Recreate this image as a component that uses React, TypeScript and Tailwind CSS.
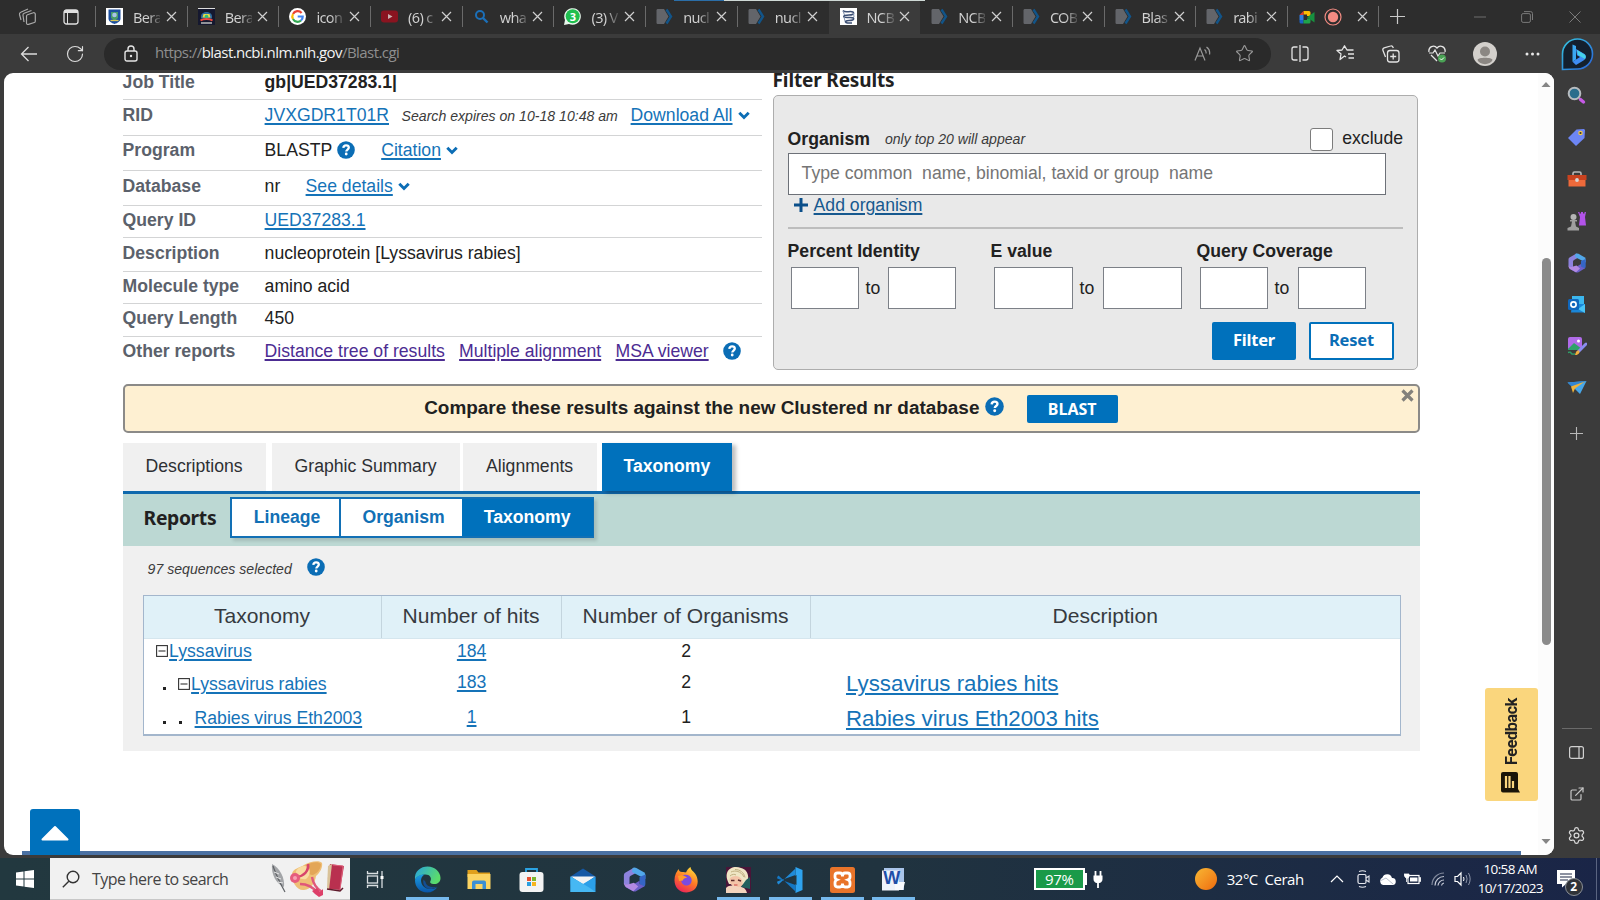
import React from "react";
import { RotateCw, Star, Settings, ExternalLink } from "lucide-react";

const UI = "font-['Open_Sans','Noto_Sans',sans-serif]";
const SRC = "font-['Noto_Sans',sans-serif]";

type Kids = { children?: React.ReactNode; className?: string };

function Svg({ w, h, vb, className = "", children }: { w: number; h: number; vb: string; className?: string; children: React.ReactNode }) {
  return (
    <svg width={w} height={h} viewBox={vb} fill="none" className={`block shrink-0 ${className}`}>
      {children}
    </svg>
  );
}

function Link({ children, className = "" }: Kids) {
  return (
    <a className={`text-[#1573b8] underline decoration-[1.5px] underline-offset-[2px] ${className}`}>{children}</a>
  );
}

function Visited({ children, className = "" }: Kids) {
  return (
    <a className={`text-[#4c2c92] underline decoration-[1.5px] underline-offset-[2px] ${className}`}>{children}</a>
  );
}

function Help({ size = 18, className = "" }: { size?: number; className?: string }) {
  return (
    <Svg w={size} h={size} vb="0 0 18 18" className={className}>
      <circle cx="9" cy="9" r="8.8" fill="#0b6db5" />
      <path d="M6.3 6.9c.2-1.7 1.3-2.5 2.8-2.5 1.6 0 2.7.9 2.7 2.2 0 1.900-2.500 2-2.500 3.900" stroke="#fff" strokeWidth="2.300" />
      <circle cx="9.200" cy="13" r="1.400" fill="#fff" />
    </Svg>
  );
}

function Chevron({ className = "" }: { className?: string }) {
  return (
    <Svg w={12} h={9} vb="0 0 12 9" className={className}>
      <path d="M1.300 1.800 6 6.500 10.700 1.800" stroke="#0b6db5" strokeWidth="2.900" />
    </Svg>
  );
}

/* ---------- favicons ---------- */

function Crest({ dark = false }: { dark?: boolean }) {
  return (
    <Svg w={17} h={17} vb="0 0 17 17">
      <rect width="17" height="17" fill={dark ? "#15182f" : "#fff"} />
      {dark ? (
        <>
          <path d="M0 .5h17" stroke="#ddd" />
          <path d="M3 8.500c0-6 11-6 11 0v2H3z" fill="#2d6a9c" />
          <path d="M5.500 6h6l1 3.500h-8z" fill="#e3d84a" />
          <circle cx="8.500" cy="8.500" r="1.800" fill="#3b7" />
          <path d="M2.500 12.500c3-2 9-2 12 0" stroke="#f04a3c" strokeWidth="2" />
          <path d="M3 15h11" stroke="#bbb" strokeWidth="1.500" />
        </>
      ) : (
        <>
          <path d="M2.500 1.500h12v9c0 3-3 4.500-6 5.500-3-1-6-2.500-6-5.500z" fill="#1c4fa0" />
          <path d="M5 4h7v6l-3.500 3L5 10z" fill="#4a9d6a" />
          <circle cx="8.500" cy="7" r="2.300" fill="#a9c4e8" />
          <path d="M4.500 12.500h8" stroke="#d8c65a" strokeWidth="1.300" />
        </>
      )}
    </Svg>
  );
}

function Google() {
  return (
    <Svg w={17} h={17} vb="0 0 17 17">
      <circle cx="8.500" cy="8.500" r="8.500" fill="#fff" />
      <path d="M12.600 5A5.200 5.200 0 0 0 4 6" stroke="#ea4335" strokeWidth="2.200" />
      <path d="M4 6a5.200 5.200 0 0 0 0 5" stroke="#fbbc05" strokeWidth="2.200" />
      <path d="M4 11a5.200 5.200 0 0 0 8 1.500" stroke="#34a853" strokeWidth="2.200" />
      <path d="M12 12.500a5 5 0 0 0 1.700-4H8.700" stroke="#4285f4" strokeWidth="2.200" />
    </Svg>
  );
}

function YouTube() {
  return (
    <Svg w={17} h={17} vb="0 0 17 17">
      <rect y="2.500" width="17" height="12" rx="3" fill="#8a1420" />
      <path d="m7 6 4.500 2.500L7 11z" fill="#c9b0b0" />
    </Svg>
  );
}

function BlueSearch() {
  return (
    <Svg w={17} h={17} vb="0 0 17 17">
      <circle cx="7" cy="7" r="4" stroke="#1b6fb8" strokeWidth="2" />
      <path d="m10 10 4.500 4.500" stroke="#1b6fb8" strokeWidth="2.400" />
    </Svg>
  );
}

function WhatsApp() {
  return (
    <span className="relative block size-[17px]">
      <Svg w={17} h={17} vb="0 0 17 17">
        <path d="M0 17 1 12A8.300 8.300 0 1 1 5 16z" fill="#e8f7ec" />
        <circle cx="8.700" cy="8.300" r="7" fill="#1fbf4f" />
      </Svg>
      <span className={`absolute inset-0 text-center text-[11px] leading-[17px] font-bold text-white ${UI}`}>3</span>
    </span>
  );
}

function Ncbi() {
  return (
    <Svg w={17} h={17} vb="0 0 17 17">
      <path d="M.5 2.500C.5 1.500 1 1 2 1h6l4.500 7.500L8 16H2c-1 0-1.500-.5-1.500-1.500z" fill="#63656a" />
      <path d="m10.500 1.500 4.500 7-4.500 7" stroke="#115489" strokeWidth="2.400" />
    </Svg>
  );
}

function Helix() {
  return (
    <Svg w={17} h={17} vb="0 0 17 17">
      <rect width="17" height="17" fill="#fff" />
      <path d="M3 2.500c2 3 7 0 10 1.500 2 2-1 3-4 3-3.500 0-6 .5-5 2 2 1.500 7-.5 9.500 1 1 2-2 2.500-4.500 2.500-3 0-4.500 1-3 2 2 1 4 .5 6 .5" stroke="#3c4f74" strokeWidth="1.500" />
      <path d="M3 3l1.500 4M13.500 5l.5 4M4 9l1 4" stroke="#8091ad" />
    </Svg>
  );
}

const tabs: { icon: React.ReactNode; text: string; active?: boolean }[] = [
  { icon: <Crest />, text: "Bera" },
  { icon: <Crest dark />, text: "Bera" },
  { icon: <Google />, text: "icon" },
  { icon: <YouTube />, text: "(6) c" },
  { icon: <BlueSearch />, text: "wha" },
  { icon: <WhatsApp />, text: "(3) V" },
  { icon: <Ncbi />, text: "nucl" },
  { icon: <Ncbi />, text: "nucl" },
  { icon: <Helix />, text: "NCB", active: true },
  { icon: <Ncbi />, text: "NCB" },
  { icon: <Ncbi />, text: "COB" },
  { icon: <Ncbi />, text: "Blas" },
  { icon: <Ncbi />, text: "rabi" },
];

function CloseX() {
  return (
    <Svg w={11} h={11} vb="0 0 11 11">
      <path d="m1 1 9 9M10 1l-9 9" stroke="#cfcfcf" strokeWidth="1.200" />
    </Svg>
  );
}

function TabStrip() {
  return (
    <div className="relative flex h-[34px] shrink-0 items-center bg-[#2d2d2d] pb-px">
      <div className="flex w-[95px] shrink-0 items-center pl-[17.500px]">
        <Svg w={19} h={18} vb="0 0 19 18">
          <g stroke="#a9a9a9" strokeWidth="1.200" strokeLinejoin="round">
            <path d="M8.500 8a1.500 1.500 0 0 1 1-1.300l5.800-1.900a1.500 1.500 0 0 1 2 1.400v7a1.500 1.500 0 0 1-1 1.300l-5.800 1.900a1.500 1.500 0 0 1-2-1.400z" />
            <path d="M6 14 5 7.500a2 2 0 0 1 1.200-2.200L13.500 2.500" />
            <path d="M3 12 1.500 6.500a2 2 0 0 1 1.200-2.300L10 1" />
          </g>
        </Svg>
        <Svg w={16} h={16} vb="0 0 16 16" className="ml-[26px]">
          <rect x="1" y="1" width="14" height="14" rx="2.500" stroke="#e0e0e0" strokeWidth="1.300" />
          <path d="M1 4V3a2 2 0 0 1 2-2h10a2 2 0 0 1 2 2v1z" fill="#e0e0e0" />
          <path d="M4.500 4v11" stroke="#e0e0e0" />
        </Svg>
      </div>
      {tabs.map((t, i) => (
        <div
          key={i}
          className={`flex h-[33px] w-[91.700px] shrink-0 items-center ${t.active ? "rounded-t-[3px] bg-[#3b3b3b] shadow-[0_1px_0_#3b3b3b]" : ""}`}
        >
          <span className={`h-[21px] w-px ${t.active || i === 9 ? "bg-transparent" : "bg-[#6a6a6a]"}`} />
          <span className="ml-[10px]">{t.icon}</span>
          <span
            className={`ml-[10px] w-[27px] bg-linear-to-r from-[#d2d2d2] from-55% to-[#d2d2d2]/20 bg-clip-text text-[14.500px] leading-5 tracking-[-0.650px] whitespace-nowrap text-transparent ${SRC}`}
          >
            {t.text}
          </span>
          <span className="ml-[5.500px]">
            <CloseX />
          </span>
        </div>
      ))}
      <span className="h-[21px] w-px bg-[#6a6a6a]" />
      <Svg w={16} h={16} vb="0 0 16 16" className="ml-[11px]">
        <path d="M4.500 2H10a1.500 1.500 0 0 1 1.500 1.500V7H8V5.500H4.500z" fill="#fbbc04" />
        <path d="M.5 6h4v5h-4z" fill="#2f7de1" />
        <path d="M.5 6 4.500 2v4z" fill="#e33b2e" />
        <path d="M.5 11h4v3.500H2A1.500 1.500 0 0 1 .5 13z" fill="#1b62c4" />
        <path d="M4.500 11H8V9.500h3.500V13a1.500 1.500 0 0 1-1.500 1.500H4.500z" fill="#1fa34a" />
        <path d="m8 8.300 7.500-5.300v10.500z" fill="#17913f" />
      </Svg>
      <Svg w={18} h={18} vb="0 0 18 18" className="ml-[9px]">
        <circle cx="9" cy="9" r="8" stroke="#f28b82" strokeWidth="1.200" />
        <circle cx="9" cy="9" r="5.200" fill="#f28b82" />
      </Svg>
      <span className="ml-[15px]">
        <CloseX />
      </span>
      <span className="ml-[10px] h-[21px] w-px bg-[#6a6a6a]" />
      <Svg w={15} h={15} vb="0 0 15 15" className="ml-[11px]">
        <path d="M7.500 0v15M0 7.500h15" stroke="#c9c9c9" strokeWidth="1.200" />
      </Svg>
      <Svg w={12} h={12} vb="0 0 12 12" className="ml-[69px]">
        <path d="M0 6h12" stroke="#6f6f6f" />
      </Svg>
      <Svg w={12} h={12} vb="0 0 12 12" className="ml-[35px]">
        <rect x=".6" y="2.600" width="8.800" height="8.800" rx="1.500" stroke="#7a7a7a" />
        <path d="M3 .6h6.500a2 2 0 0 1 2 2V9" stroke="#7a7a7a" />
      </Svg>
      <Svg w={12} h={12} vb="0 0 12 12" className="ml-[36px]">
        <path d="m.5.500 11 11M11.500.500l-11 11" stroke="#7a7a7a" />
      </Svg>
      <div className="absolute top-0 left-[674px] flex h-px w-[251px]">
        <span className="w-[50px] bg-[#2b6ea8]" />
        <span className="flex-1 bg-[#cfd9d6]" />
      </div>
    </div>
  );
}

function Toolbar() {
  return (
    <div className="flex h-[39px] shrink-0 items-center bg-[#3b3b3b]">
      <Svg w={18} h={16} vb="0 0 18 16" className="ml-[20px]">
        <path d="M17 8H1.500M8.500 1l-7 7 7 7" stroke="#dcdcdc" strokeWidth="1.300" />
      </Svg>
      <RotateCw size={20} strokeWidth={1.4} color="#dcdcdc" className="ml-[27px] shrink-0" />
      <div className="ml-[19px] flex h-[32px] w-[1167px] shrink-0 items-center rounded-full bg-[#2a2a2a]">
        <Svg w={14} h={17} vb="0 0 14 17" className="ml-[20px]">
          <rect x="1" y="6" width="12" height="10" rx="2" stroke="#e4e4e4" strokeWidth="1.400" />
          <path d="M4 6V4a3 3 0 0 1 6 0v2" stroke="#e4e4e4" strokeWidth="1.400" />
          <circle cx="7" cy="11" r="1.200" fill="#e4e4e4" />
        </Svg>
        <span className={`ml-[17px] pb-[2px] text-[15px] tracking-[-0.560px] whitespace-nowrap text-[#8f8f8f] ${UI}`}>
          https://<span className="text-[#f3f3f3]">blast.ncbi.nlm.nih.gov</span>/Blast.cgi
        </span>
        <span className="flex-1" />
        <Svg w={17} h={16} vb="0 0 17 16">
          <path d="M1 14.500 6 2l5 12.500M3 10h6.500" stroke="#9a9a9a" strokeWidth="1.200" />
          <path d="M10.500 3.500q2 1.500 1.500 4M12.500 1q4 3 3 7.500" stroke="#9a9a9a" strokeWidth="1.200" />
        </Svg>
        <Star size={19} strokeWidth={1.4} color="#9a9a9a" className="mr-[17px] ml-[24px]" />
      </div>
      <Svg w={18} h={17} vb="0 0 18 17" className="ml-[20px]">
        <path d="M6.500 2H3a2 2 0 0 0-2 2v9a2 2 0 0 0 2 2h3.500M11.500 2H15a2 2 0 0 1 2 2v9a2 2 0 0 1-2 2h-3.500M9 0v17" stroke="#e4e4e4" strokeWidth="1.300" />
      </Svg>
      <Svg w={19} h={17} vb="0 0 19 17" className="ml-[27px]">
        <path d="M10 12 8.500 11 4 14.500l1-5.500-4-3.500 5-.5L8.500.800 11 5h6.500M12 9h6M12.500 13H18" stroke="#e4e4e4" strokeWidth="1.300" strokeLinejoin="round" />
      </Svg>
      <Svg w={18} h={18} vb="0 0 18 18" className="ml-[27px]">
        <rect x="5.500" y="5.500" width="11.500" height="11.500" rx="2.500" stroke="#e4e4e4" strokeWidth="1.300" />
        <path d="M11.200 8.500v6M8.200 11.500h6M3.500 12 1 5.500a2 2 0 0 1 1.200-2.700L8.500 1a2 2 0 0 1 2.500 1.200l.3.800" stroke="#e4e4e4" strokeWidth="1.300" />
      </Svg>
      <Svg w={19} h={18} vb="0 0 19 18" className="ml-[28px]">
        <path d="M1 7C0 2 6-1 9 3c3-4 9-1 8 4M3 10l6 6" stroke="#e4e4e4" strokeWidth="1.300" />
        <path d="M1 8h4l2-3 3 6 2-3h5" stroke="#e4e4e4" strokeWidth="1.200" />
        <circle cx="14" cy="13.500" r="4" fill="#4aa255" />
        <path d="m12 13.500 1.500 1.500 2.500-2.500" stroke="#fff" />
      </Svg>
      <Svg w={24} h={24} vb="0 0 24 24" className="ml-[26px]">
        <circle cx="12" cy="12" r="12" fill="#d3d0cc" />
        <circle cx="12" cy="9.500" r="5" fill="#8b8783" />
        <path d="M4.500 18c0-3 15-3 15 0-2 5.500-13 5.500-15 0z" fill="#8b8783" />
      </Svg>
      <Svg w={15} h={4} vb="0 0 15 4" className="ml-[28px]">
        <g fill="#e8e8e8">
          <circle cx="2" cy="2" r="1.500" />
          <circle cx="7.500" cy="2" r="1.500" />
          <circle cx="13" cy="2" r="1.500" />
        </g>
      </Svg>
      <Svg w={33} h={34} vb="0 0 33 34" className="ml-[21px]">
        <defs>
          <linearGradient id="bing" x1="0" y1="0" x2="1" y2="1">
            <stop stopColor="#35c5e0" />
            <stop offset="1" stopColor="#2a62d8" />
          </linearGradient>
        </defs>
        <path d="M1.500 32.500V17a15 15 0 1 1 15 15z" fill="#14202e" stroke="url(#bing)" strokeWidth="1.600" />
        <path d="M11.500 7.500 15 9v13.500l-3.500 2.200z" fill="#3aa8f2" />
        <path d="m15 12 8.500 5c2.500 2 1.500 5-1 6.500L15 28l-3.500-3.300L19 20l-3-1.700z" fill="#3f8df5" />
        <path d="m16 13 7.500 4.500c1.500 1 1.500 3 .5 4.500L17 18z" fill="#45d2e8" />
      </Svg>
    </div>
  );
}

/* ---------- page ---------- */

function JobRow({ label, h, pt, last, children }: { label: string; h: string; pt: string; last?: boolean; children: React.ReactNode }) {
  return (
    <div className={`flow-root ${h} ${last ? "" : "border-b border-[#d3d4d5]"}`}>
      <div className={`flex items-baseline leading-5 whitespace-nowrap ${pt}`}>
        <span className="w-[142px] shrink-0 font-bold text-[#5b616b]">{label}</span>
        {children}
      </div>
    </div>
  );
}

function JobDetails() {
  return (
    <div className="w-[639px] shrink-0">
      <JobRow label="Job Title" h="h-[27px]" pt="-mt-px">
        <span className="font-bold">gb|UED37283.1|</span>
      </JobRow>
      <JobRow label="RID" h="h-[36px]" pt="pt-[5px]">
        <Link className="w-[137px]">JVXGDR1T01R</Link>
        <span className="w-[229px] text-[14.100px] text-[#3b3b3b] italic">Search expires on 10-18 10:48 am</span>
        <Link>Download All</Link>
        <Chevron className="mb-[1px] ml-[5px] self-center" />
      </JobRow>
      <JobRow label="Program" h="h-[35px]" pt="pt-[4px]">
        <span>BLASTP</span>
        <Help className="mr-[26px] ml-[5px] self-center" />
        <Link>Citation</Link>
        <Chevron className="ml-[5px] self-center" />
      </JobRow>
      <JobRow label="Database" h="h-[35px]" pt="pt-[5px]">
        <span className="w-[41px]">nr</span>
        <Link>See details</Link>
        <Chevron className="ml-[5px] self-center" />
      </JobRow>
      <JobRow label="Query ID" h="h-[32px]" pt="pt-[4px]">
        <Link>UED37283.1</Link>
      </JobRow>
      <JobRow label="Description" h="h-[34px]" pt="pt-[5px]">
        <span>nucleoprotein [Lyssavirus rabies]</span>
      </JobRow>
      <JobRow label="Molecule type" h="h-[32px]" pt="pt-[4px]">
        <span>amino acid</span>
      </JobRow>
      <JobRow label="Query Length" h="h-[33px]" pt="pt-[4px]">
        <span>450</span>
      </JobRow>
      <JobRow label="Other reports" h="h-[32px]" pt="pt-[4px]" last>
        <span className="w-[194.500px]"><Visited>Distance tree of results</Visited></span>
        <span className="w-[156.500px]"><Visited>Multiple alignment</Visited></span>
        <Visited>MSA viewer</Visited>
        <Help className="ml-[14px] self-center" />
      </JobRow>
    </div>
  );
}

function Range({ title, inputW, className = "", gap }: { title: string; inputW: string; className?: string; gap: string }) {
  const box = `h-[42px] border border-[#7c8087] bg-white ${inputW}`;
  return (
    <div className={className}>
      <div className="leading-5 font-bold">{title}</div>
      <div className="mt-[6px] ml-[3px] flex items-center">
        <span className={box} />
        <span className={gap}>to</span>
        <span className={box} />
      </div>
    </div>
  );
}

function FilterPanel() {
  return (
    <div className="ml-[11px] w-[645.400px] shrink-0">
      <div className={`h-[22px] text-[19px] leading-[14px] font-bold tracking-[-0.150px] ${SRC}`}>Filter Results</div>
      <div className="h-[275px] rounded-[5px] border border-[#adadad] bg-[#e9e9e9] pt-[32px] pr-[14px] pl-[14px]">
        <div className="flex h-[25px] items-center pb-[4px] leading-5">
          <span className="font-bold">Organism</span>
          <span className="ml-[15px] text-[14.100px] text-[#3b3b3b] italic">only top 20 will appear</span>
          <span className="flex-1" />
          <span className="mt-[1px] mr-[9px] size-[23px] rounded-[3px] border border-[#7c7c7c] bg-white" />
          <span className="pb-px">exclude</span>
        </div>
        <div className="flex h-[42px] w-[598px] items-center border border-[#6d7178] bg-white px-[13px] pb-[2px] whitespace-pre text-[#757575]">
          Type common  name, binomial, taxid or group  name
        </div>
        <div className="flex h-[34px] items-start border-b-2 border-[#bdbdbd] pl-[5px] leading-5">
          <Svg w={16} h={16} vb="0 0 16 16" className="mt-[2px] mr-[5px]">
            <path d="M8 1v14M1 8h14" stroke="#0b4f8a" strokeWidth="3" />
          </Svg>
          <span className="text-[#17598f] underline decoration-[1.500px] underline-offset-2">Add organism</span>
        </div>
        <div className="flex pt-[12px]">
          <Range title="Percent Identity" inputW="w-[68px]" gap="ml-[7px] w-[22px]" className="w-[203px]" />
          <Range title="E value" inputW="w-[79px]" gap="ml-[7px] w-[23px]" className="w-[206px]" />
          <Range title="Query Coverage" inputW="w-[68px]" gap="ml-[7px] w-[23px]" />
        </div>
        <div className={`mt-[13px] flex justify-end gap-[13px] pr-[9px] text-[16.500px] font-bold tracking-[-0.200px] ${SRC}`}>
          <span className="flex h-[38px] w-[84px] items-center justify-center rounded-[2px] bg-[#0071bc] pb-px text-white">Filter</span>
          <span className="flex h-[38px] w-[85px] items-center justify-center rounded-[2px] border-2 border-[#0071bc] bg-white pb-px text-[#0b6db5]">Reset</span>
        </div>
      </div>
    </div>
  );
}

function Banner() {
  return (
    <div className="flex h-[49px] items-start rounded-[5px] border-2 border-[#8b8a88] bg-[#fef0d2] pl-[299.600px]">
      <span className="mt-[11px] w-[561px] text-[18.930px] leading-[22px] font-bold whitespace-nowrap text-[#212121]">
        Compare these results against the new Clustered nr database
      </span>
      <Help size={19} className="mt-[11px]" />
      <span className={`mt-[9px] ml-[22.500px] flex h-[28px] w-[91px] items-center justify-center rounded-[2px] bg-[#0071bc] pb-px text-[16px] font-bold text-white ${SRC}`}>
        BLAST
      </span>
      <Svg w={13} h={13} vb="0 0 13 13" className="mt-[3px] ml-[283px]">
        <path d="m1.500 1.500 10 10M11.500 1.500l-10 10" stroke="#83817c" strokeWidth="3.200" />
      </Svg>
    </div>
  );
}

function MinusBox() {
  return (
    <Svg w={12} h={12} vb="0 0 12 12" className="mr-[1.500px]">
      <rect x=".6" y=".6" width="10.800" height="10.800" stroke="#333" strokeWidth="1.100" />
      <path d="M2.500 6h7" stroke="#333" strokeWidth="1.100" />
    </Svg>
  );
}

function Dot({ className = "" }: { className?: string }) {
  return <span className={`size-[3px] shrink-0 bg-[#222] ${className}`} />;
}

function TaxTable() {
  const grid = "grid grid-cols-[238px_180px_249px_1fr]";
  return (
    <div className="h-[141px] w-[1258.400px] border border-b-2 border-[#a3b6cc] bg-white">
      <div className={`${grid} h-[43px] border-b border-[#d5e6ee] bg-[#e0f1f8] text-center text-[21.070px] leading-[40px] text-[#363a40]`}>
        <span className="border-r border-[#c4d5de]">Taxonomy</span>
        <span className="border-r border-[#c4d5de]">Number of hits</span>
        <span className="border-r border-[#c4d5de]">Number of Organisms</span>
        <span>Description</span>
      </div>
      <div className={`${grid} h-[28px] pt-[2px] leading-5`}>
        <span className="flex h-5 items-center pl-[12px]">
          <MinusBox />
          <Link>Lyssavirus</Link>
        </span>
        <span className="text-center"><Link>184</Link></span>
        <span className="text-center">2</span>
      </div>
      <div className={`${grid} h-[34px] pt-[5px] leading-5`}>
        <span className="flex h-5 items-center pt-[4px] pl-[19px]">
          <Dot className="mt-[9px] mr-[12px]" />
          <MinusBox />
          <Link>Lyssavirus rabies</Link>
        </span>
        <span className="text-center"><Link>183</Link></span>
        <span className="text-center">2</span>
        <Link className="pt-[2px] pl-[35.400px] text-[22.300px]">Lyssavirus rabies hits</Link>
      </div>
      <div className={`${grid} h-[33px] pt-[6px] leading-5`}>
        <span className="flex h-5 items-center pt-[2px] pl-[19px]">
          <Dot className="mt-[9px] mr-[13px]" />
          <Dot className="mt-[9px] mr-[13px]" />
          <Link>Rabies virus Eth2003</Link>
        </span>
        <span className="text-center"><Link>1</Link></span>
        <span className="text-center">1</span>
        <Link className="pt-[2px] pl-[35.400px] text-[22.300px]">Rabies virus Eth2003 hits</Link>
      </div>
    </div>
  );
}

function Results() {
  const tab = "flex h-[48px] items-center justify-center pb-[2px]";
  return (
    <div>
      <div className="mt-[10px] flex border-b-[3px] border-[#0f69ad] text-[#2d2f33]">
        <span className={`${tab} w-[143px] bg-[#f0f0f0]`}>Descriptions</span>
        <span className={`${tab} ml-[6px] w-[188px] bg-[#f0f0f0]`}>Graphic Summary</span>
        <span className={`${tab} ml-[3px] w-[134px] bg-[#f0f0f0]`}>Alignments</span>
        <span className={`${tab} ml-[5.300px] w-[130px] bg-[#0071bc] font-bold text-white shadow-[4px_2px_4px_rgba(0,0,0,0.25)]`}>Taxonomy</span>
      </div>
      <div className="flex h-[52px] items-start bg-[#bcd8d3]">
        <span className={`mt-[10px] ml-[21px] w-[86px] text-[19.300px] leading-[28px] font-bold tracking-[-0.350px] ${SRC}`}>Reports</span>
        <div className="mt-[3px] flex h-[41px] border-2 border-[#1270b5] bg-white font-bold text-[#1270b5] shadow-[3px_3px_3px_rgba(0,0,0,0.12)]">
          <span className="flex w-[109px] items-center justify-center border-r-2 border-[#1270b5] pl-[4px]">Lineage</span>
          <span className="flex w-[121px] items-center justify-center pl-[5px]">Organism</span>
          <span className="-mr-px flex w-[131px] items-center justify-center bg-[#0071bc] text-white">Taxonomy</span>
        </div>
      </div>
      <div className="h-[205px] bg-[#f0f0f0] pl-[20px]">
        <div className="flex h-[49px] items-start pt-[13px] pl-[5px] text-[14.100px] leading-5 text-[#3b3b3b] italic">
          <span className="w-[159.500px]">97 sequences selected</span>
          <Help className="-mt-px" />
        </div>
        <TaxTable />
      </div>
    </div>
  );
}

function Page() {
  return (
    <div className="relative ml-[4px] flex h-[782px] w-[1550px] shrink-0 overflow-hidden rounded-[9px] bg-white font-['Liberation_Sans',Arial,sans-serif] text-[17.640px] text-[#212121]">
      <div className="w-[1534px] shrink-0 pl-[118.600px]">
        <div className="flex h-[311px]">
          <JobDetails />
          <FilterPanel />
        </div>
        <div className="w-[1297.400px]">
          <Banner />
          <Results />
        </div>
      </div>
      <div className="flex w-[16px] flex-col items-center bg-[#fcfcfc]">
        <Svg w={10} h={6} vb="0 0 10 6" className="mt-[9px]">
          <path d="M5 0 9.500 5H.5z" fill="#858585" />
        </Svg>
        <span className="mt-[170px] h-[387px] w-[9px] rounded-full bg-[#8b8b8b]" />
        <Svg w={10} h={6} vb="0 0 10 6" className="mt-[194px]">
          <path d="M5 5 9.500 0H.5z" fill="#858585" />
        </Svg>
      </div>
      <div className="absolute bottom-0 left-[18px] h-[4px] w-[1499px] bg-[#4b71a3]" />
      <div className="absolute bottom-0 left-[26px] flex h-[46px] w-[50px] justify-center rounded-t-[3px] bg-[#0071bc] pt-[16px]">
        <Svg w={28} h={17} vb="0 0 28 17">
          <path d="M14 2 26.500 14.500h-25z" fill="#fff" stroke="#fff" strokeWidth="2" strokeLinejoin="round" />
        </Svg>
      </div>
      <div className="absolute top-[615px] left-[1481px] flex h-[113px] w-[53px] flex-col items-center rounded-[3px] bg-[#fad67d]">
        <span className="mt-[10px] h-[67px] rotate-180 text-[16px] leading-[20px] font-bold tracking-[-0.300px] whitespace-nowrap [writing-mode:vertical-rl] font-['Roboto',sans-serif]">
          Feedback
        </span>
        <Svg w={19} h={21} vb="0 0 19 21" className="mt-[7px] mr-[3px]">
          <path d="M0 2a2 2 0 0 1 2-2h13a2 2 0 0 1 2 2v15l2 3.500H2a2 2 0 0 1-2-2z" fill="#1a1508" />
          <path d="M5 4v12M8.500 4v12M12 9v7" stroke="#fad67d" strokeWidth="2.200" />
        </Svg>
      </div>
    </div>
  );
}

/* ---------- browser sidebar ---------- */

function Ms365({ size }: { size: number }) {
  return (
    <Svg w={size} h={size} vb="0 0 20 20">
      <path d="M9.500.5 2.500 4.500Q1.500 5 1.500 6.500v7l4.500 2.500V8.500Q6 7.500 7 7l4.500-2.500V2z" fill="#8d82dd" />
      <path d="M8.500.8q1.500-.8 3 0l6 3.400q1.200.8 1.200 2.300v3L8 4z" fill="#52a8ea" />
      <path d="M18.700 6v7.500q0 1.500-1.200 2.200l-3.500-2V8z" fill="#3565c4" />
      <path d="m18 15.300-6.500 3.900q-1.500.8-3 0L2 15.500q5 .5 7-1.500l5-3v2.500z" fill="#6b5fc8" />
      <path d="M1.500 12.500Q2.500 15 6 13.500l3.500-1 3.500 3-4 3.800-6-3.400q-1.500-1-1.500-3.400z" fill="#b38ae2" />
    </Svg>
  );
}

const sideIcons: React.ReactNode[] = [
  <Svg w={19} h={19} vb="0 0 19 19">
    <circle cx="7.500" cy="7.500" r="5.800" fill="#2a6d8c" stroke="#b7bcc0" strokeWidth="2" />
    <path d="m12 12 2 2" stroke="#aaa" strokeWidth="2" />
    <path d="m13.500 13.500 3 2.500" stroke="#c65ae6" strokeWidth="3.400" strokeLinecap="round" />
  </Svg>,
  <Svg w={19} h={19} vb="0 0 19 19">
    <path d="M1 10 9.500 1.500 17 1l1 1-.5 8L9 18z" fill="#6d86f5" />
    <circle cx="13.500" cy="5" r="1.700" fill="#333" stroke="#f3c948" strokeWidth="1.200" />
  </Svg>,
  <Svg w={20} h={18} vb="0 0 20 18">
    <path d="M6 5V3.500Q6 2 7.500 2h5Q14 2 14 3.500V5" stroke="#b9b9b9" strokeWidth="1.600" />
    <path d="M.5 5h19v5H.5z" fill="#c9421f" />
    <path d="M1.500 10h17v6.500h-17z" fill="#ee6a3b" />
    <circle cx="10" cy="10" r="1.900" fill="#d7d7d7" />
  </Svg>,
  <Svg w={20} h={20} vb="0 0 20 20">
    <path d="M11 1h1.500v1.500H14V1h2v1.500h1.500V1H19l-1 5 1 8.500h-7L13 6z" fill="#b353ea" />
    <circle cx="6.500" cy="6" r="3" fill="#b5b5b5" />
    <path d="M3 9h7v1.500H8l1 5 3 1.500v2.500H.5V17L4 15.500l1-5H3z" fill="#9f9f9f" />
  </Svg>,
  <Ms365 size={20} />,
  <Svg w={19} h={19} vb="0 0 19 19">
    <path d="M5 1h12v10H5z" fill="#3cb7ee" />
    <path d="M5 9h13v8.500H4z" fill="#1a86d8" />
    <path d="m18 9-7 5 7 4z" fill="#49c4f5" />
    <rect x="1" y="4" width="11" height="11" rx="1.500" fill="#0f67bd" />
    <circle cx="6.500" cy="9.500" r="2.600" stroke="#fff" strokeWidth="1.700" />
  </Svg>,
  <Svg w={20} h={20} vb="0 0 20 20">
    <rect x="1" y="1" width="14" height="13" rx="2" fill="#b06be8" />
    <path d="M1 13 7 7l8 6v1H1z" fill="#2fa36b" />
    <circle cx="11.500" cy="5" r="1.500" fill="#fff" />
    <path d="m12 15 7-7" stroke="#8a8cf0" strokeWidth="3" strokeLinecap="round" />
    <path d="M8 19c1-4 2-5 4-4.500 1.500 2-1 5-4 4.500z" fill="#f2b13c" />
    <path d="M1 16.500q3-1 3 .5t4 1" stroke="#2fa36b" strokeWidth="1.400" />
  </Svg>,
  <Svg w={20} h={16} vb="0 0 20 16">
    <path d="M.5 2.500 19.500 1 13 14 8.500 9.500z" fill="#47a6e8" />
    <path d="m.5 2.500 19-1.500L6 8z" fill="#3186d2" />
    <path d="m4 6.500 14-5L8 8.500 6 13z" fill="#f0b33a" />
  </Svg>,
];

function Sidebar() {
  return (
    <div className="flex flex-1 flex-col items-center bg-[#3b3b3b] pr-px">
      <div className="flex flex-col items-center pt-[1.500px]">
        {sideIcons.map((ic, i) => (
          <span key={i} className="flex h-[41.800px] items-center justify-center">{ic}</span>
        ))}
      </div>
      <Svg w={13} h={13} vb="0 0 13 13" className="mt-[18px]">
        <path d="M6.500 0v13M0 6.500h13" stroke="#b9b9b9" strokeWidth="1.100" />
      </Svg>
      <span className="mt-[288px] h-px w-[30px] bg-[#6a6a6a]" />
      <Svg w={15} h={13} vb="0 0 15 13" className="mt-[17px]">
        <rect x=".6" y=".6" width="13.800" height="11.800" rx="2" stroke="#d0d0d0" strokeWidth="1.200" />
        <path d="M10 1v11" stroke="#d0d0d0" strokeWidth="1.200" />
      </Svg>
      <ExternalLink size={16} strokeWidth={1.8} color="#c8c8c8" className="mt-[27px]" />
      <Settings size={19} strokeWidth={1.6} color="#d8d8d8" className="mt-[24px]" />
    </div>
  );
}

/* ---------- taskbar ---------- */

const apps: { icon: React.ReactNode; on?: boolean }[] = [
  {
    icon: (
      <Svg w={18} h={17} vb="0 0 18 17">
        <path d="M1.500 0v2.500h10V0M1.500 17v-2.500h10V17" stroke="#d8dee0" strokeWidth="1.300" />
        <rect x="1.500" y="5" width="10" height="7" stroke="#d8dee0" strokeWidth="1.300" />
        <path d="M16 0v17" stroke="#d8dee0" strokeWidth="1.300" />
        <path d="M14.500 5h3v3h-3z" fill="#fff" />
      </Svg>
    ),
  },
  {
    on: true,
    icon: (
      <Svg w={27} h={27} vb="0 0 27 27">
        <defs>
          <linearGradient id="edgeA" x1="0" y1="0" x2="1" y2=".4">
            <stop stopColor="#27a3e0" />
            <stop offset="1" stopColor="#5bdc6b" />
          </linearGradient>
          <linearGradient id="edgeB" x1="0" y1="0" x2="0" y2="1">
            <stop stopColor="#1b9de2" />
            <stop offset="1" stopColor="#0a55a8" />
          </linearGradient>
        </defs>
        <path d="M1 14C0 5 7 .5 13.500.5 21 .5 26.500 6 26.500 12c0 4-3 6-6 6-4 0-5-1.500-4-3 1.500-3-.5-6.500-5-6.500C6 8.500 2 11 1 14z" fill="url(#edgeA)" />
        <path d="M1 14c1-3.500 5-5.500 9.500-5.500-2.500 1.500-3.500 4-3.500 6 0 5 4.500 8.500 9.500 8.500 3 0 5-.5 7-2C21 24.500 17.500 26.500 13.500 26.500 6 26.500.8 21 1 14z" fill="url(#edgeB)" />
        <path d="M9.500 13.500C8 20 13 24 18.500 22.800c2-.4 3.500-1.300 4.500-2-6 1.500-11-1-11.500-5z" fill="#134e94" />
      </Svg>
    ),
  },
  {
    icon: (
      <Svg w={24} h={21} vb="0 0 24 21">
        <path d="M.5 1h9l2 2.500h11.500V8H.5z" fill="#e0a01c" />
        <path d="M.5 5h23v15H.5z" fill="#fcd462" />
        <path d="M5 20v-6.500Q5 11.500 7 11.500h10q2 0 2 2V20h-3.500v-5h-7v5z" fill="#3c8fd4" />
      </Svg>
    ),
  },
  {
    icon: (
      <Svg w={25} h={26} vb="0 0 25 26">
        <path d="M7 6V2h11v4" stroke="#2ba3e3" strokeWidth="1.800" />
        <rect x=".5" y="5" width="24" height="20" rx="3" fill="#f3f3f3" />
        <path d="M8 10h4v4H8z" fill="#e8502f" />
        <path d="M13 10h4v4h-4z" fill="#7cb82f" />
        <path d="M8 15h4v4H8z" fill="#2a9fe0" />
        <path d="M13 15h4v4h-4z" fill="#f6b51e" />
      </Svg>
    ),
  },
  {
    icon: (
      <Svg w={26} h={24} vb="0 0 26 24">
        <path d="m.5 8.500 12.500-8 12.500 8v8H.5z" fill="#1558a5" />
        <path d="M1 8.500h24L13 17z" fill="#f3f3f3" />
        <path d="M.5 8.500 13 16l12.500-7.500V24H.5z" fill="#2b9fe8" />
        <path d="M.5 8.500 20 20l5.500 4H.5z" fill="#46b8f3" />
      </Svg>
    ),
  },
  { icon: <Ms365 size={25} /> },
  {
    icon: (
      <Svg w={25} h={26} vb="0 0 25 26">
        <defs>
          <linearGradient id="ff" x1=".8" y1="0" x2=".3" y2="1">
            <stop stopColor="#ffdf3c" />
            <stop offset=".5" stopColor="#ff7b25" />
            <stop offset="1" stopColor="#ec2358" />
          </linearGradient>
        </defs>
        <path d="M2 6c1-1.500 2-3 2.500-4 .5 2 1.500 3 3.500 3 2 .2 3 0 4 .5C13 3 14.500 1 16.500 0c.3 3 2.500 4 4.500 6.500C26 13 24.500 25 12.500 25.500 2 25.500-2 15 2 6z" fill="url(#ff)" />
        <path d="M8 9c3-2.500 8.500-1.500 9.500 3 .8 4-2 6.800-5.500 6.500-4-.4-6-4-4-9.500z" fill="#7a4be0" />
        <path d="M4 9c4-2 8 0 9 2-2 0-4 .5-4 2.500L5 14z" fill="#ff9a2b" />
      </Svg>
    ),
  },
  {
    on: true,
    icon: (
      <Svg w={25} h={26} vb="0 0 25 26">
        <rect width="25" height="26" fill="#4a1538" />
        <path d="M1 6c2-6 9-7 14-5 5 1 8 6 7 11-1 3-2 5-4 6L3 17C1 13 0 10 1 6z" fill="#efe6c4" />
        <path d="M4 11c3-3 10-3 12 2s-1 8-5 8-9-6-7-10z" fill="#f3c4a8" />
        <path d="M5 5c4-2 10-1 13 5M9 2.500c5 0 9 3 10 8M4 9c2-2 5-2 6-1" stroke="#bfae80" />
        <path d="M0 26v-5c3-3 8-3 12-1 5-1 8 2 9 6z" fill="#f3d4be" />
        <path d="M5 13.500h3.500M12 13l3 1" stroke="#5a2a2a" strokeWidth="1.500" />
        <path d="m15 20 5-7 4-3v12z" fill="#23605e" />
        <path d="M8 18h3.500" stroke="#c44" />
      </Svg>
    ),
  },
  {
    on: true,
    icon: (
      <Svg w={26} h={26} vb="0 0 26 26">
        <path d="m18.500 0 7 3v20l-7 3z" fill="#2ea3ef" />
        <path d="m18.500.5-17 16-1.300-1.500v-1.500L18.500 7z" fill="#1f8ad8" transform="translate(0 1)" />
        <path d="m18.500 25.500-17-16L.2 11v1.500L18.500 19z" fill="#1477c4" transform="translate(0 -1)" />
        <path d="M19.500 8v10L13 13z" fill="#22363f" />
      </Svg>
    ),
  },
  {
    on: true,
    icon: (
      <Svg w={25} h={26} vb="0 0 25 26">
        <rect width="25" height="26" rx="2.500" fill="#e9742a" />
        <path d="M7.500 6h2.500q2.500 0 2.500 3.500Q12.500 6 15 6h2.500q2.500 0 2.500 2.500v1.500q0 2-2 2.800 2 .8 2 3v1.500Q20 20 17.500 20H15q-2.500 0-2.500-3.500Q12.500 20 10 20H7.500Q5 20 5 17.300v-1.500q0-2.200 2-3-2-.8-2-2.800V8.500Q5 6 7.500 6z" stroke="#fff" strokeWidth="2.800" />
      </Svg>
    ),
  },
  {
    on: true,
    icon: (
      <span className="relative block h-[25px] w-[25px]">
        <Svg w={25} h={25} vb="0 0 25 25">
          <path d="M3 1h20v22H3z" fill="#a9c4ea" />
          <path d="M1 3.500h17v20H1z" fill="#eef3fb" />
          <path d="M14 15h10l-2 8h-8z" fill="#f8fafd" />
        </Svg>
        <span className="absolute top-0 left-[2px] text-[18px] leading-[23px] font-bold text-[#1f4fa8] font-['Liberation_Sans',sans-serif]">W</span>
      </span>
    ),
  },
];

function SearchArt() {
  return (
    <Svg w={76} h={38} vb="0 0 76 38">
      <path d="M2 4c8 4 13 14 12 23-8-3-13-13-12-23z" fill="#a3a5a8" />
      <path d="M3 6c3 9 7 17 12 26" stroke="#5f6266" strokeWidth="1.200" />
      <path d="M4 12l5 2M6 17l5 2M8 22l5 1" stroke="#e8e8e8" />
      <path d="M22 14c1-6 8-6 12-9 6-4 16-5 18-2 1 4-2 10-6 13-1 7-5 13-12 14s-13-9-12-16z" fill="#efbf77" />
      <path d="M35 6c6-4 13-5 16-2 0 4-3 9-8 11-5 0-8-4-8-9z" fill="#e3a657" />
      <path d="M26 11c3-5 9-6 12-4 3 3 2 9-2 12-5 1-10-2-10-8z" fill="#f9dca2" />
      <path d="M38 4c1 7-4 12-11 13" stroke="#d8456b" strokeWidth="2.600" />
      <path d="M42 17c1 6 5 12 10 15M30 24c7 0 13 3 18 9" stroke="#e0587a" strokeWidth="2.400" />
      <circle cx="25" cy="18" r="5" fill="#e65d7e" />
      <circle cx="25" cy="18" r="2" fill="#f7a0b2" />
      <path d="m42 31 5-3 3 4 3-3v6l-4 2-4-3z" fill="#dd3f69" />
      <path d="m60 4 14 2-4 24-11-1c-2-8-1-17 1-25z" fill="#b9304f" />
      <path d="m58 6 4-2-3 26-2-2z" fill="#d9c39a" />
      <path d="m63 5 10 1-3 24" stroke="#e0627c" />
      <path d="m57 29 13 2 3-3" stroke="#5f1a2b" strokeWidth="1.500" />
    </Svg>
  );
}

function Taskbar() {
  return (
    <div className={`flex h-[42px] shrink-0 items-stretch bg-linear-to-r from-[#22383f] via-[#20333f] via-55% to-[#1a2547] text-white ${UI}`}>
      <div className="flex w-[50px] items-center justify-center">
        <Svg w={18} h={18} vb="0 0 18 18">
          <path d="M0 2.500 7.500 1.500v7H0zM8.500 1.300 18 0v8.500H8.500zM0 9.500h7.500v7L0 15.500zM8.500 9.500H18V18l-9.500-1.300z" fill="#fff" />
        </Svg>
      </div>
      <div className="flex w-[300px] items-center border-b border-[#c8c8c8] bg-[#f1f1f1]">
        <Svg w={18} h={18} vb="0 0 18 18" className="ml-[12px]">
          <circle cx="11" cy="7" r="5.800" stroke="#333" strokeWidth="1.400" />
          <path d="M6.800 11.200.8 17.200" stroke="#333" strokeWidth="1.400" />
        </Svg>
        <span className="ml-[12px] w-[178px] text-[16px] tracking-[-0.580px] whitespace-nowrap text-[#444]">Type here to search</span>
        <SearchArt />
      </div>
      {apps.map((a, i) => (
        <div key={i} className={`flex w-[51.800px] flex-col items-center ${i === 0 ? "pr-[2px]" : ""}`}>
          <span className="flex h-[39px] items-center pt-[4px]">{a.icon}</span>
          {a.on && <span className="h-[3px] w-[43px] bg-[#76b9ed]" />}
        </div>
      ))}
      <div className="ml-[114px] flex items-center">
        <span className="flex h-[22px] w-[51px] items-center justify-center border-2 border-white bg-[#1a9a49] text-[15px] tracking-[-0.400px]">97%</span>
        <span className="h-[12px] w-[2px] bg-white" />
        <Svg w={10} h={17} vb="0 0 10 17" className="ml-[6px]">
          <path d="M2.500 0v5M7.500 0v5M5 10v7" stroke="#fff" strokeWidth="1.800" />
          <path d="M.5 4.500h9V8q0 3-3 4h-3q-3-1-3-4z" fill="#fff" />
        </Svg>
      </div>
      <div className="ml-[92px] flex items-center">
        <span className="size-[22px] rounded-full bg-linear-to-br from-[#f7b733] to-[#ee6a0c]" />
        <span className="ml-[10px] w-[103px] text-[15px] tracking-[-0.500px] whitespace-pre">32°C  Cerah</span>
      </div>
      <div className="flex items-center">
        <Svg w={14} h={8} vb="0 0 14 8">
          <path d="m1 7 6-6 6 6" stroke="#fff" strokeWidth="1.200" />
        </Svg>
        <Svg w={13} h={18} vb="0 0 13 18" className="ml-[13px]">
          <rect x="1" y="4.500" width="8" height="9" rx="1.500" stroke="#e6e8ee" strokeWidth="1.200" />
          <path d="m9 8 3-2v6l-3-2M2 1.500q3.500-1.500 7 0M2 16.500q3.500 1.500 7 0" stroke="#e6e8ee" strokeWidth="1.100" />
        </Svg>
        <Svg w={17} h={12} vb="0 0 17 12" className="ml-[9px]">
          <path d="M4 12a4 4 0 0 1-.5-7.500A5 5 0 0 1 13 5a3.500 3.500 0 0 1 .5 7z" fill="#fff" />
          <path d="m1 8 6-3 7 6" stroke="#b9c0cc" />
        </Svg>
        <Svg w={17} h={12} vb="0 0 17 12" className="ml-[8px]">
          <rect x="4" y="2.500" width="11" height="8" stroke="#fff" strokeWidth="1.200" />
          <path d="M6 4.500h7.500v4H6z" fill="#fff" />
          <path d="M15.500 4.500h1v4h-1zM0 1h5v3l-2 1.500L1 4zM2.500 5v4" fill="#fff" stroke="#fff" strokeWidth=".8" />
        </Svg>
        <Svg w={14} h={14} vb="0 0 14 14" className="ml-[10px]">
          <g stroke="#c5cad6" strokeWidth="1.200">
            <path d="M1 13A12 12 0 0 1 13 1" opacity=".6" />
            <path d="M4 13.500A9 9 0 0 1 13 4.500" />
            <path d="M7 13.500a6 6 0 0 1 6-5.500" />
            <path d="M10.500 13.500a3 3 0 0 1 2.500-2.500" />
          </g>
        </Svg>
        <Svg w={18} h={16} vb="0 0 18 16" className="ml-[9px]">
          <path d="M1 5.500h2.500L7 2v12l-3.500-3.500H1z" stroke="#fff" strokeWidth="1.200" />
          <path d="M9.500 6q1 2 0 4" stroke="#fff" />
          <path d="M12 4q2.200 4 0 8M14.500 2q3.300 6 0 12" stroke="#8b93a8" />
        </Svg>
      </div>
      <div className="flex w-[77px] flex-col items-center pt-[2px] text-[13.500px] leading-[19px] tracking-[-0.650px] whitespace-nowrap">
        <span>10:58 AM</span>
        <span>10/17/2023</span>
      </div>
      <div className="relative ml-[6px] w-[41px]">
        <Svg w={18} h={18} vb="0 0 18 18" className="mt-[12px] ml-[2px]">
          <path d="M0 0h18v14H9l-4 3.500V14H0z" fill="#fff" />
          <path d="M3 4h12M3 7h12M3 10h8" stroke="#1c2744" strokeWidth="1.200" />
        </Svg>
        <span className="absolute top-[20px] left-[10px] flex size-[18px] items-center justify-center rounded-full border border-[#8b8f96] bg-[#2f3238] text-[12px] font-bold">2</span>
      </div>
      <span className="w-px bg-[#5a6480]" />
    </div>
  );
}

export default function App() {
  return (
    <div className="flex h-[900px] w-[1600px] flex-col overflow-hidden bg-[#3b3b3b]">
      <TabStrip />
      <Toolbar />
      <div className="flex h-[785px] shrink-0 bg-[#3b3b3b]">
        <Page />
        <Sidebar />
      </div>
      <Taskbar />
    </div>
  );
}
